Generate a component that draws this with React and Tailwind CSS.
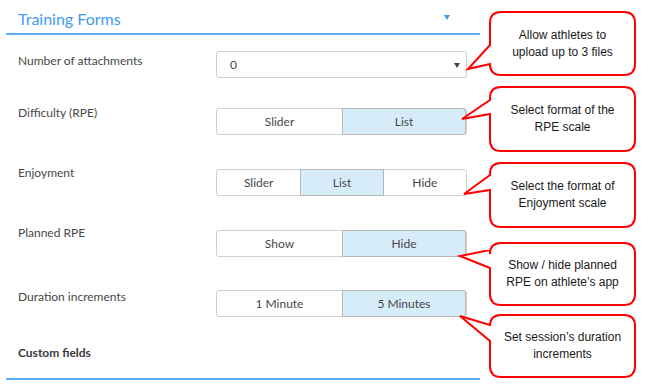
const callouts = [
  { y1: 12, y2: 75, tip: [468, 69], b1: 45, b2: 64, lines: ['Allow athletes to', 'upload up to 3 files'] },
  { y1: 87, y2: 151, tip: [462, 119], b1: 100, b2: 114, lines: ['Select format of the', 'RPE scale'] },
  { y1: 163, y2: 227, tip: [464, 194], b1: 175, b2: 190, lines: ['Select the format of', 'Enjoyment scale'] },
  { y1: 243, y2: 305, tip: [460, 256], b1: 250, b2: 268, lines: ['Show / hide planned', 'RPE on athlete\u2019s app'] },
  { y1: 315, y2: 377, tip: [460, 316], b1: 325, b2: 341, lines: ['Set session\u2019s duration', 'increments'] },
];

const X1 = 490;
const X2 = 635;
const R = 11;

// rounded box with a wedge on its left side
const calloutPath = ({ y1, y2, tip, b1, b2 }) =>
  `M${X1 + R},${y1} H${X2 - R} Q${X2},${y1} ${X2},${y1 + R} V${y2 - R} Q${X2},${y2} ${X2 - R},${y2} ` +
  `H${X1 + R} Q${X1},${y2} ${X1},${y2 - R} V${b2} L${tip[0]},${tip[1]} L${X1},${b1} V${y1 + R} Q${X1},${y1} ${X1 + R},${y1} Z`;

const Segmented = ({ options, active, widths }) => (
  <div className="flex h-[27px] w-[251px] rounded-[3px] border border-[#d0d0d0] bg-white">
    {options.map((opt, i) => (
      <div
        key={opt}
        className={`flex items-center justify-center text-[12px] text-[#474747] ${
          i === active ? 'bg-[#d7ecf9] border border-[#b8b8b8] -my-px' : ''
        } ${i > 0 && i !== active && i - 1 !== active ? 'border-l border-[#d0d0d0]' : ''} ${
          i === options.length - 1 ? 'rounded-r-[3px]' : ''
        }`}
        style={{ width: widths[i] }}
      >
        {opt}
      </div>
    ))}
  </div>
);

const Row = ({ label, mt, labelMt, ctrlMt, children }) => (
  <div className={`flex items-start pl-3 ${mt}`}>
    <div className={`w-[198px] text-[12px] text-[#474747] ${labelMt}`}>{label}</div>
    <div className={ctrlMt}>{children}</div>
  </div>
);

export default function App() {
  return (
    <div className="relative h-[385px] w-[658px] overflow-hidden bg-white font-['Lato',sans-serif]">
      <div className="ml-[6px] w-[474px]">
        <div className="flex h-[35px] items-center border-b-2 border-[#5db0f6] pl-3 pr-[30px] pt-[4px]">
          <span className="text-[16px] text-[#3e9cf2]">Training Forms</span>
          <span className="ml-auto mt-[-2px] h-0 w-0 border-x-[3.5px] border-t-[5px] border-x-transparent border-t-[#3e9cf2]" />
        </div>

        <Row label="Number of attachments" mt="mt-[16px]" labelMt="mt-[1px]" ctrlMt="mt-0">
          <div className="flex h-[27px] w-[251px] items-center rounded-[3px] border border-[#d0d0d0] pl-[13px] pr-[6px] text-[12px] text-[#474747]">
            <span>0</span>
            <span className="ml-auto mt-[1px] h-0 w-0 border-x-[3px] border-t-[5px] border-x-transparent border-t-[#444]" />
          </div>
        </Row>

        <Row label="Difficulty (RPE)" mt="mt-[26px]" labelMt="mt-0" ctrlMt="mt-[4px]">
          <Segmented options={['Slider', 'List']} active={1} widths={[126, 125]} />
        </Row>

        <Row label="Enjoyment" mt="mt-[29px]" labelMt="mt-0" ctrlMt="mt-[5px]">
          <Segmented options={['Slider', 'List', 'Hide']} active={1} widths={[84, 84, 83]} />
        </Row>

        <Row label="Planned RPE" mt="mt-[28px]" labelMt="mt-0" ctrlMt="mt-[6px]">
          <Segmented options={['Show', 'Hide']} active={1} widths={[126, 125]} />
        </Row>

        <Row label="Duration increments" mt="mt-[31px]" labelMt="mt-0" ctrlMt="mt-[2px]">
          <Segmented options={['1 Minute', '5 Minutes']} active={1} widths={[126, 125]} />
        </Row>

        <div className="mt-[27px] pl-3 text-[12px] font-bold text-[#3a3a3a]">Custom fields</div>
        <div className="mt-[16px] border-b-2 border-[#5db0f6]" />
      </div>

      {/* annotation callouts */}
      <svg className="absolute left-0 top-0" width="658" height="385">
        {callouts.map((c, i) => (
          <path key={i} d={calloutPath(c)} fill="white" stroke="#ff0000" strokeWidth="2" strokeLinejoin="miter" />
        ))}
      </svg>
      {callouts.map((c, i) => (
        <div
          key={i}
          className="absolute flex flex-col items-center justify-center text-[12px] leading-[17px] text-[#1a1a1a] font-['Liberation_Sans',sans-serif]"
          style={{ left: X1, top: c.y1, width: X2 - X1, height: c.y2 - c.y1 }}
        >
          {c.lines.map((l) => (
            <span key={l}>{l}</span>
          ))}
        </div>
      ))}
    </div>
  );
}
